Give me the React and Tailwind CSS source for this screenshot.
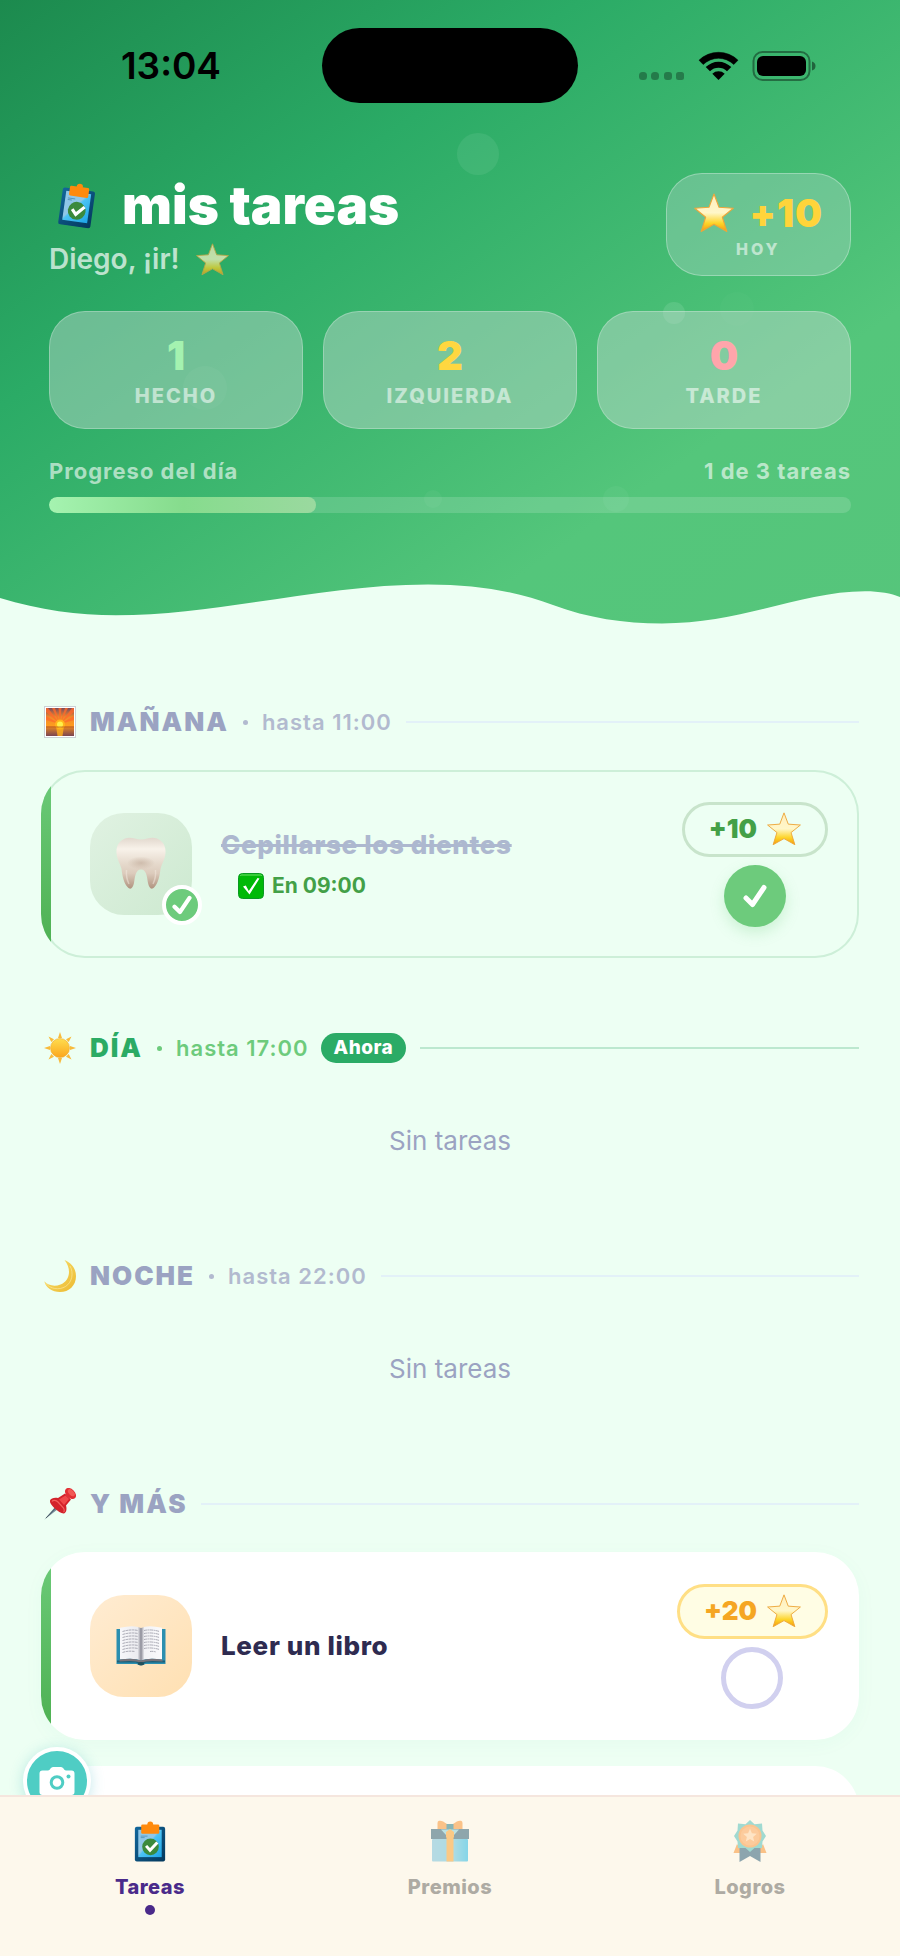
import React from 'react';

function Clipboard({ className }) {
  return (
    <svg viewBox="0 0 32 42" className={className} aria-hidden="true">
      <defs>
        <linearGradient id="clipBoard" x1="0" y1="0" x2="1" y2="1">
          <stop offset="0" stopColor="#12679c" />
          <stop offset="1" stopColor="#04385c" />
        </linearGradient>
        <linearGradient id="clipPaper" x1="0" y1="0" x2="1" y2="1">
          <stop offset="0.45" stopColor="#8fc7e8" />
          <stop offset="0.5" stopColor="#4cc3f4" />
          <stop offset="1" stopColor="#1ba4e6" />
        </linearGradient>
      </defs>
      <rect x="0.5" y="6" width="31" height="35.5" rx="2" fill="url(#clipBoard)" />
      <rect x="4" y="9" width="24" height="28" fill="url(#clipPaper)" />
      <path d="M6.5 15.500h7M6.500 17h4" stroke="#4d8fb8" strokeWidth="0.8" />
      <rect x="7" y="3.500" width="18.500" height="9.500" rx="1.300" fill="#ff8a0c" />
      <circle cx="16.250" cy="3.500" r="3" fill="#ff8a0c" />
      <circle cx="16.500" cy="26.500" r="8.500" fill="#3b8a3c" />
      <path d="M12 25.500l4 4.500 7.500-8" fill="none" stroke="#fff" strokeWidth="3" />
    </svg>
  );
}

function Star({ className }) {
  return (
    <svg viewBox="0 0 40 40" className={className} aria-hidden="true">
      <defs>
        <linearGradient id="starFill" x1="0" y1="0" x2="0" y2="1">
          <stop offset="0.15" stopColor="#fff0c0" />
          <stop offset="0.5" stopColor="#fff7c9" />
          <stop offset="0.78" stopColor="#fdd428" />
          <stop offset="1" stopColor="#f59a0c" />
        </linearGradient>
      </defs>
      <path
        d="M20 1L25 14.300L39.300 15.300L28.300 24.200L32.800 38.500L20 31.300L7.200 38.500L11.700 24.200L0.700 15.300L15 14.300Z"
        fill="url(#starFill)"
        stroke="#eda63a"
        strokeWidth="1.100"
        strokeLinejoin="round"
      />
    </svg>
  );
}

function Sunrise() {
  return (
    <svg viewBox="0 0 32 32" className="size-8" aria-hidden="true">
      <defs>
        <linearGradient id="riseSky" x1="0" y1="0" x2="0" y2="1">
          <stop offset="0" stopColor="#7a4a5c" />
          <stop offset="0.5" stopColor="#f08a2c" />
          <stop offset="1" stopColor="#ff9d1e" />
        </linearGradient>
        <linearGradient id="riseSea" x1="0" y1="0" x2="0" y2="1">
          <stop offset="0" stopColor="#f08b1f" />
          <stop offset="1" stopColor="#7a4552" />
        </linearGradient>
      </defs>
      <rect x="0.500" y="0.500" width="31" height="31" fill="#fff" stroke="#cbd2d6" />
      <rect x="2" y="2" width="28" height="18" fill="url(#riseSky)" />
      <path d="M16 18L2 14V10ZM16 18L2 6V2H4ZM16 18L8 2H11ZM16 18L14.500 2H17.500ZM16 18L21 2H24ZM16 18L28 2H30V6ZM16 18L30 10V14Z" fill="#ff6a2b" opacity="0.8" />
      <rect x="2" y="20" width="28" height="10" fill="url(#riseSea)" />
      <path d="M12 20h8l-1.500 10h-5z" fill="#ffb01c" opacity="0.8" />
      <circle cx="16" cy="18.500" r="5" fill="#ffb41c" />
      <circle cx="16" cy="18.500" r="3" fill="#fff04a" />
      <path d="M2 21h28" stroke="#b3521f" strokeWidth="0.700" />
    </svg>
  );
}

function Sun() {
  return (
    <svg viewBox="0 0 32 32" className="size-8" aria-hidden="true">
      <defs>
        <linearGradient id="sunFill" x1="0" y1="0" x2="0" y2="1">
          <stop offset="0" stopColor="#ffdd4f" />
          <stop offset="1" stopColor="#fba61d" />
        </linearGradient>
      </defs>
      <path
        d="M16 0l2 6h-4zM16 32l2-6h-4zM0 16l6-2v4zM32 16l-6-2v4zM4.500 4.500l5.500 2.800-2.700 2.700zM27.500 4.500l-5.500 2.800 2.700 2.700zM4.500 27.500l5.500-2.800-2.700-2.700zM27.500 27.500l-5.500-2.800 2.700-2.700z"
        fill="#f8bb3c"
      />
      <circle cx="16" cy="16" r="9.500" fill="url(#sunFill)" stroke="#f2a92b" strokeWidth="0.600" />
    </svg>
  );
}

function Moon() {
  return (
    <svg viewBox="0 0 32 32" className="size-8" aria-hidden="true">
      <defs>
        <linearGradient id="moonFill" x1="0" y1="0" x2="1" y2="1">
          <stop offset="0.300" stopColor="#f5d65e" />
          <stop offset="1" stopColor="#ecb92f" />
        </linearGradient>
      </defs>
      <path d="M20.500 0C28 3 32 9 32 16.200C32 25.500 25 32 16 32C8 32 2 28 0.300 21.300C4 25.500 10.500 27 16.500 24.500C25 21 28.500 10.500 20.500 0Z" fill="url(#moonFill)" />
      <path d="M1.500 23C6 29 15 30.500 21.500 26.500C28 22.500 30 13 26 6" fill="none" stroke="#fbe79a" strokeWidth="1" opacity="0.700" />
    </svg>
  );
}

function Pin() {
  return (
    <svg viewBox="0 0 32 32" className="size-8" aria-hidden="true">
      <path d="M0.300 31.700L11.500 18.500L14 21Z" fill="#748a99" />
      <path d="M12 19.500L2 30" stroke="#35424c" strokeWidth="0.700" />
      <path d="M6 12.500C7 9.800 11 9.200 14 10L21 5.500L27 11.500L22 17.500C23 21 22.500 24.500 20 25.500C17.500 25.800 14 23.500 10.500 20.300C7.500 17.300 5.500 14.500 6 12.500Z" fill="#d3232b" />
      <path d="M15 11.500L21.500 7.500L25 11L20 17Z" fill="#ef4a4a" />
      <path d="M8 13.500C9 12 12 12 14 14L19.500 20C20.500 22 20.500 23.500 19.500 24" fill="none" stroke="#f2625f" strokeWidth="1.200" />
      <ellipse cx="26.500" cy="5.500" rx="6.500" ry="4.300" transform="rotate(45 26.500 5.500)" fill="#e12f34" />
      <ellipse cx="27.300" cy="4.700" rx="4.300" ry="2.400" transform="rotate(45 27.300 4.700)" fill="#f25a55" />
    </svg>
  );
}

function Tooth() {
  return (
    <svg viewBox="0 0 50 54" className="h-[54px] w-[50px]" aria-hidden="true">
      <defs>
        <linearGradient id="toothFill" x1="0" y1="0" x2="0" y2="1">
          <stop offset="0" stopColor="#e2d8ce" />
          <stop offset="0.220" stopColor="#f8f2ea" />
          <stop offset="0.500" stopColor="#e6dacd" />
          <stop offset="0.700" stopColor="#dccbbc" />
          <stop offset="1" stopColor="#b0937f" />
        </linearGradient>
        <radialGradient id="toothShade">
          <stop offset="0" stopColor="#c9b5a4" stopOpacity="0.800" />
          <stop offset="1" stopColor="#c9b5a4" stopOpacity="0" />
        </radialGradient>
      </defs>
      <path
        d="M9 1.500C15 -0.500 19 2.500 25 2.500C31 2.500 35 -0.500 41 1.500C47 4 50 9 49.500 16C49 23 45.500 27 44.500 32C43.500 40 42 46 38.500 50C35.500 53.500 33 51 32 46C31 40 30.500 32.500 25 32.500C19.500 32.500 19 40 18 46C17 51 14.500 53.500 11.500 50C8 46 6.500 40 5.500 32C4.500 27 1 23 0.500 16C0 9 3 4 9 1.500Z"
        fill="url(#toothFill)"
      />
      <ellipse cx="25" cy="26" rx="14" ry="6.500" fill="url(#toothShade)" />
      <path d="M10.500 33C10 39 11.500 44 13 47M39.500 33C40 39 38.500 44 37 47" fill="none" stroke="#f4e9df" strokeWidth="1.500" opacity="0.500" />
    </svg>
  );
}

function Book() {
  return (
    <svg viewBox="0 0 50 40" className="h-[40px] w-[50px]" aria-hidden="true">
      <defs>
        <linearGradient id="bookPage" x1="0" y1="0" x2="1" y2="0">
          <stop offset="0" stopColor="#f7f7fa" />
          <stop offset="0.420" stopColor="#ececf0" />
          <stop offset="0.500" stopColor="#8d8d98" />
          <stop offset="0.580" stopColor="#f2f2f5" />
          <stop offset="1" stopColor="#fafafc" />
        </linearGradient>
      </defs>
      <path d="M0.500 3h49v35h-20q-4.500 2.500-9 0h-20z" fill="#2b8fb0" />
      <path d="M1 34.500h19q5 2.500 10 0h19v2H30q-5 3-10 0H1z" fill="#1c5f78" />
      <path d="M4 33.500V1.800Q18-1.300 25 2Q32-1.300 46 1.800V33.500Q32 31.500 25 34.500Q18 31.500 4 33.500Z" fill="url(#bookPage)" />
      <path d="M3.500 33.500Q18 31.500 25 34.500Q32 31.500 46.500 33.500v2Q32 34 25 36.500Q18 34 3.500 35.500z" fill="#77737a" />
      <path
        d="M6.500 5.500Q15 3 22 4.500M6.500 8.500Q15 6 22 7.500M6.500 11.500Q15 9 22 10.500M6.500 14.500Q15 12 22 13.500M6.500 17.500Q15 15 22 16.500M6.500 20.500Q15 18 22 19.500M6.500 23.500Q15 21 22 22.500M6.500 26.500Q12 24.500 19 25.500M28 4.500Q35 3 43.500 5.500M28 7.500Q35 6 43.500 8.500M28 10.500Q35 9 43.500 11.500M28 13.500Q35 12 43.500 14.500M28 16.500Q35 15 43.500 17.500M28 19.500Q35 18 43.500 20.500M28 22.500Q35 21 43.500 23.500M34 25.500Q37 25 40 26"
        fill="none"
        stroke="#a2a2ad"
        strokeWidth="0.900"
        strokeDasharray="3 0.600 2 0.500"
      />
      <path d="M22 37q3-2 6 0v1.500q-3 2-6 0z" fill="#23505c" />
    </svg>
  );
}

function GreenCheckBox() {
  return (
    <svg viewBox="0 0 26 26" className="size-[26px]" aria-hidden="true">
      <rect x="0.500" y="0.500" width="25" height="25" rx="4" fill="#00b907" stroke="#0a9a22" />
      <path d="M2.500 3q0-1 1-1h19q1 0 1 1" fill="none" stroke="#6fe06a" strokeWidth="1" />
      <path d="M5 13.500l2.800-1 3 5.500L19.500 5l2 0.500L11.500 21.500Z" fill="#fff" />
    </svg>
  );
}

function Gift() {
  return (
    <svg viewBox="0 0 40 42" className="h-[42px] w-[40px] opacity-50" aria-hidden="true">
      <defs>
        <linearGradient id="giftBox" x1="0" y1="0" x2="1" y2="0">
          <stop offset="0" stopColor="#72bedb" />
          <stop offset="0.600" stopColor="#5ec0dc" />
          <stop offset="1" stopColor="#10b4e6" />
        </linearGradient>
      </defs>
      <rect x="2" y="19" width="36" height="22.500" rx="1" fill="url(#giftBox)" />
      <path d="M17 4Q12 0 9 0.800Q7.500 1 7.500 3V9.500H17ZM23 4Q28 0 31 0.800Q32.500 1 32.500 3V9.500H23Z" fill="#f98d26" />
      <rect x="1" y="9" width="38" height="10" fill="#22566e" />
      <rect x="16.500" y="4" width="7" height="6" fill="#117583" />
      <path d="M11 9.500H29L24 15H16Z" fill="#7ccddb" />
      <rect x="16.500" y="15" width="7" height="26.500" fill="#fb9b20" />
      <path d="M16 12l4-3 4 3v5q-4 4-8 0z" fill="#fb9b20" />
    </svg>
  );
}

function Ribbon() {
  return (
    <svg viewBox="0 0 34 42" className="h-[42px] w-[34px] opacity-50" aria-hidden="true">
      <path d="M4 24L0.500 33H10ZM30 24L33.500 33H24Z" fill="#f88c25" />
      <path d="M6.500 25H27.500V42L17 36L6.500 42Z" fill="#1d5571" />
      <path d="M17 0L21.500 4.200L29 3.500L29.500 10.500L33 16L29.500 21.500L29 28L21.500 28L17 32L12.500 28L5 28L4.500 21.500L1 16L4.500 10.500L5 3.500L12.500 4.200Z" fill="#46bdb8" />
      <circle cx="17" cy="16" r="11.500" fill="#fa9135" />
      <circle cx="17" cy="16" r="9.500" fill="#fca04f" />
      <path d="M17 8.800L18.900 13.300L23.800 13.700L20.100 16.900L21.200 21.600L17 19.100L12.800 21.600L13.900 16.900L10.200 13.700L15.100 13.300Z" fill="#ffd2a0" />
    </svg>
  );
}

function Tick({ className }) {
  return (
    <svg viewBox="0 0 24 24" className={className} aria-hidden="true">
      <path d="M3 14L9.500 20.500L21 3.500" fill="none" stroke="#fff" strokeWidth="5" strokeLinecap="round" strokeLinejoin="round" />
    </svg>
  );
}

function StatusBar() {
  return (
    <div className="grid grid-cols-3 items-center pt-7">
      <span className="pl-[42px] text-center text-[37px] leading-10 font-semibold text-black">13:04</span>
      <div className="h-[75px] w-[256px] justify-self-center rounded-full bg-black" />
      <div className="flex items-center justify-center pr-11">
        <svg viewBox="0 0 180 30" className="h-[30px] w-[180px]" aria-hidden="true">
          <g fill="#000" opacity="0.300">
            <rect x="1" y="21" width="8" height="8" rx="3.500" />
            <rect x="13" y="21" width="8" height="8" rx="3.500" />
            <rect x="26" y="21" width="8" height="8" rx="3" />
            <rect x="38" y="21" width="8" height="8" rx="2.500" />
          </g>
          <g transform="translate(61 0.500)">
            <path d="M0 8.700A28 28 0 0 1 39 8.700L34.800 13A22 22 0 0 0 4.200 13Z" stroke="#000" strokeWidth="0.500" strokeLinejoin="round" />
            <path d="M6.700 15.500A18.300 18.300 0 0 1 32.300 15.500L28 19.800A12.200 12.200 0 0 0 11 19.800Z" />
            <path d="M13.300 22.300A9 9 0 0 1 25.700 22.300L19.500 28.500Z" />
          </g>
          <rect x="115.500" y="1" width="56" height="28" rx="9" fill="none" stroke="#000" strokeOpacity="0.400" strokeWidth="2" />
          <rect x="119" y="5" width="49" height="20" rx="6" />
          <path d="M174 10.500q3.500 1 3.500 4.500T174 19.500z" opacity="0.450" />
        </svg>
      </div>
    </div>
  );
}

function Stat({ value, label, tone }) {
  return (
    <div className="flex flex-col items-center gap-2 rounded-[36px] border border-white/25 bg-[#d2dcdc]/40 pt-6 pb-5">
      <span className={`text-[40px] leading-10 font-black ${tone}`}>{value}</span>
      <span className="text-xl leading-6 font-extrabold tracking-[2px] text-white/55">{label}</span>
    </div>
  );
}

function Header() {
  return (
    <header className="relative shrink-0 overflow-hidden bg-[linear-gradient(145deg,#1c8a4e_0%,#2bab66_32%,#54c67b_74%,#56c57b_100%)]">
      <div className="absolute top-[133px] left-[457px] size-[42px] rounded-full bg-white/7" />
      <div className="absolute top-[302px] left-[663px] size-[22px] rounded-full bg-white/10" />
      <div className="absolute top-[292px] left-[720px] size-[34px] rounded-full bg-white/2" />
      <div className="absolute top-[366px] left-[183px] size-[44px] rounded-full bg-white/4" />
      <div className="absolute top-[490px] left-[424px] size-[18px] rounded-full bg-white/4" />
      <div className="absolute top-[486px] left-[603px] size-[26px] rounded-full bg-white/4" />

      <StatusBar />

      <div className="relative px-[49px] pt-[70px]">
        <div className="flex items-start justify-between">
          <div className="pt-1">
            <h1 className="flex items-center gap-[27px] text-[53px] leading-[56px] font-black text-white">
              <Clipboard className="ml-2.5 h-11 w-9 rotate-[8deg]" />
              <span>mis tareas</span>
            </h1>
            <p className="mt-2 flex items-center gap-4 text-[28px] leading-9 font-semibold text-white/70">
              Diego, ¡ir!
              <Star className="size-[33px] opacity-70" />
            </p>
          </div>
          <div className="flex flex-col items-center gap-1.5 rounded-[36px] border border-white/30 bg-[#c8dcdc]/30 px-[27px] pt-[19px] pb-4">
            <div className="flex items-center gap-4 text-[38px] leading-10 font-black tracking-wide text-[#ffd43a]">
              <Star className="size-10" />
              +10
            </div>
            <span className="text-base leading-5 font-extrabold tracking-[3px] text-white/55">HOY</span>
          </div>
        </div>

        <div className="mt-[34px] grid grid-cols-3 gap-5">
          <Stat value="1" label="HECHO" tone="text-[#a4f2b0]" />
          <Stat value="2" label="IZQUIERDA" tone="text-[#ffd740]" />
          <Stat value="0" label="TARDE" tone="text-[#ffa5ab]" />
        </div>

        <div className="mt-7 flex justify-between text-[22px] leading-7 font-bold tracking-[1px] text-white/60">
          <span id="progreso">Progreso del día</span>
          <span>1 de 3 tareas</span>
        </div>
        <div
          role="progressbar"
          aria-labelledby="progreso"
          aria-valuemin={0}
          aria-valuemax={3}
          aria-valuenow={1}
          className="mt-3 h-4 overflow-hidden rounded-full bg-white/15"
        >
          <div className="h-full w-1/3 rounded-full bg-linear-to-r from-[#a5f3b0] via-[#86dc8d] to-[#9ad99f]" />
        </div>
      </div>

      <svg viewBox="0 0 900 60" preserveAspectRatio="none" className="relative mt-[68px] block h-[60px] w-full" aria-hidden="true">
        <path
          d="M0 17C40 29 78 34.300 116 34.300C218 34.300 322 3.500 428 3.500C478 3.500 518 11 553 24C588 37 624 42.500 662 42.500C742 42.500 802 10.300 865 10.300C880 10.300 891 12.500 900 16V60H0Z"
          fill="#edfff3"
        />
      </svg>
    </header>
  );
}

function Section({ icon, title, until, now, children }) {
  return (
    <section>
      <div className="flex h-8 items-center pl-[3px] whitespace-nowrap">
        {icon}
        <h2 className={`ml-3.5 text-[26px] leading-8 font-black tracking-[2px] ${now ? 'text-[#2bab64]' : 'text-[#9ba3c2]'}`}>
          {title}
        </h2>
        {until && (
          <span className={`ml-3.5 flex items-center gap-3.5 text-[22px] leading-7 font-semibold tracking-[1px] ${now ? 'text-[#6dcb7c]' : 'text-[#b2bacf]'}`}>
            <span className={`size-[5px] rounded-full ${now ? 'bg-[#6dcb7c]' : 'bg-[#b2bacf]'}`} />
            hasta {until}
          </span>
        )}
        {now && (
          <span className="ml-3 rounded-full bg-[#2bab66] px-[13px] text-[19px] leading-[30px] font-extrabold tracking-wide text-white">
            Ahora
          </span>
        )}
        <span className={`ml-3.5 h-0.5 flex-1 ${now ? 'bg-[#bce8cf]' : 'bg-[#e3f1f8]'}`} />
      </div>
      <div className="mt-8">{children}</div>
    </section>
  );
}

function Task({ icon, title, points, doneAt }) {
  const done = Boolean(doneAt);
  return (
    <li
      className={`flex min-h-[188px] items-center overflow-hidden rounded-[44px] ${
        done ? 'shadow-[inset_0_0_0_2px_#cdefd8]' : 'bg-white shadow-[0_4px_20px_rgba(60,190,120,0.04)]'
      }`}
    >
      <div className="w-2.5 shrink-0 self-stretch bg-linear-to-b from-[#6ccb79] to-[#4caf50]" />
      <div
        className={`relative ml-[39px] flex size-[102px] shrink-0 items-center justify-center rounded-[34px] bg-linear-to-br ${
          done ? 'from-[#e0f2e2] to-[#cde9d0]' : 'from-[#ffecd2] to-[#ffe0b2]'
        }`}
      >
        {icon}
        {done && (
          <span className="absolute -right-2.5 -bottom-2.5 flex size-10 items-center justify-center rounded-full border-4 border-white bg-[#6dcb7c]">
            <Tick className="size-5" />
          </span>
        )}
      </div>
      <div className="ml-[29px] flex-1">
        <h3
          className={`text-[26px] leading-9 font-extrabold tracking-wide ${
            done ? 'text-[#adb8cf] line-through decoration-[3px]' : 'text-[#2e2b50]'
          }`}
        >
          {title}
        </h3>
        {done && (
          <p className="mt-2 ml-[17px] flex items-center gap-2 text-[21px] leading-[30px] font-bold text-[#43a047]">
            <GreenCheckBox />
            En {doneAt}
          </p>
        )}
      </div>
      <div className="mr-[31px] flex shrink-0 flex-col items-center gap-2">
        <div
          className={`flex h-[55px] items-center gap-2.5 rounded-full border-3 px-6 text-[26px] leading-8 font-black ${
            done ? 'border-[#c8e4cb] text-[#43a047]' : 'border-[#ffdf85] bg-[#fffde4] text-[#f5a623]'
          }`}
        >
          {points}
          <Star className="size-[34px]" />
        </div>
        <label className="grid size-[62px] place-items-center">
          <input
            type="checkbox"
            defaultChecked={done}
            aria-label={title}
            className="peer col-start-1 row-start-1 size-full appearance-none rounded-full border-5 border-[#d1d0ef] bg-white checked:border-0 checked:bg-[#6dcb7c] checked:shadow-[0_6px_14px_rgba(109,203,124,0.25)]"
          />
          <Tick className="pointer-events-none z-10 col-start-1 row-start-1 hidden size-6 peer-checked:block" />
        </label>
      </div>
    </li>
  );
}

function Empty() {
  return <p className="flex h-[90px] items-center justify-center text-[26px] leading-8 text-[#9ba3c2]">Sin tareas</p>;
}

function Tab({ icon, label, active }) {
  return (
    <button type="button" aria-current={active ? 'page' : undefined} className="flex flex-1 flex-col items-center">
      <span className="flex h-10 items-center justify-center">{icon}</span>
      <span className={`mt-3.5 text-xl leading-6 font-extrabold tracking-wide ${active ? 'text-[#4a2a8a]' : 'text-[#aeaba3]'}`}>{label}</span>
      <span className={`mt-1.5 size-2.5 rounded-full ${active ? 'bg-[#4a2a8a]' : ''}`} />
    </button>
  );
}

export default function App() {
  return (
    <div className="flex h-screen flex-col bg-[#edfff3] font-['Inter','Liberation_Sans',sans-serif]">
      <Header />

      <div className="relative flex min-h-0 flex-1 flex-col overflow-hidden">
        <main className="flex flex-1 flex-col gap-[74px] overflow-y-auto px-[41px] pt-[65px] [scrollbar-width:none]">
          <Section icon={<Sunrise />} title="MAÑANA" until="11:00">
            <ul>
              <Task icon={<Tooth />} title="Cepillarse los dientes" points="+10" doneAt="09:00" />
            </ul>
          </Section>
          <Section icon={<Sun />} title="DÍA" until="17:00" now>
            <Empty />
          </Section>
          <Section icon={<Moon />} title="NOCHE" until="22:00">
            <Empty />
          </Section>
          <Section icon={<Pin />} title="Y MÁS">
            <ul className="flex flex-col gap-[26px]">
              <Task icon={<Book />} title="Leer un libro" points="+20" />
              <li className="h-[188px] rounded-[44px] bg-white" />
            </ul>
          </Section>
        </main>

        <button
          type="button"
          aria-label="Cámara"
          className="absolute -bottom-5 left-[23px] flex size-[68px] items-center justify-center rounded-full border-4 border-white bg-[#4fcdc4] shadow-[0_2px_14px_rgba(60,180,190,0.3)]"
        >
          <svg viewBox="0 0 36 28" className="h-7 w-9" aria-hidden="true">
            <path d="M3.500 3.500H9Q10.500 3.500 11.500 1.500Q12.500 0 14 0H22Q23.500 0 24.500 1.500Q25.500 3.500 27 3.500H32.500Q35.500 3.500 35.500 6.500V25Q35.500 28 32.500 28H3.500Q0.500 28 0.500 25V6.500Q0.500 3.500 3.500 3.500Z" fill="#fff" />
            <circle cx="18" cy="15.500" r="5.800" fill="#fff" stroke="#4fcdc4" strokeWidth="3" />
            <circle cx="29.500" cy="9.500" r="2" fill="#4fcdc4" />
          </svg>
        </button>
      </div>

      <nav className="z-10 flex shrink-0 border-t-2 border-[#f5e6de] bg-[#fdf8ec] pt-6 pb-[41px]">
        <Tab icon={<Clipboard className="h-[41px] w-8" />} label="Tareas" active />
        <Tab icon={<Gift />} label="Premios" />
        <Tab icon={<Ribbon />} label="Logros" />
      </nav>
    </div>
  );
}
